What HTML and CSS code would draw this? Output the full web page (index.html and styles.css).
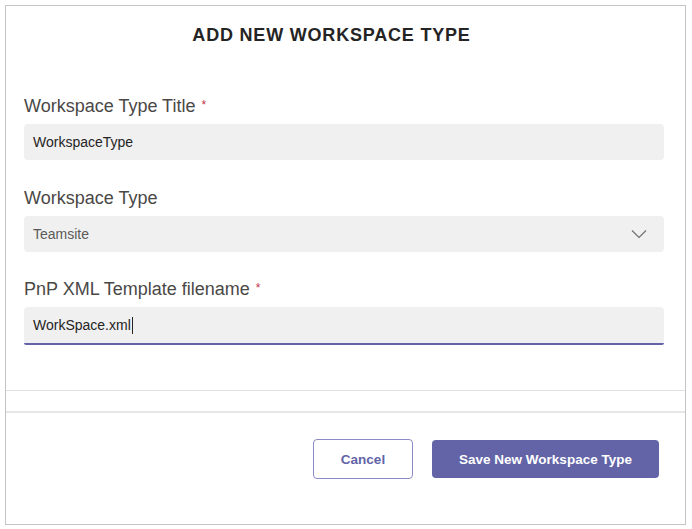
FILE: index.html
```html
<!DOCTYPE html>
<html lang="en">
<head>
    <meta charset="UTF-8">
    <meta name="viewport" content="width=device-width, initial-scale=1.0">
    <title>Add New Workspace Type</title>
    <link rel="stylesheet" href="styles.css">
</head>
<body>
    <div class="dialog">
        <h1 class="title">ADD NEW WORKSPACE TYPE</h1>
        <form class="fields" id="form">
            <div class="field">
                <label class="label">Workspace Type Title <span class="req">*</span></label>
                <div class="input">WorkspaceType</div>
            </div>
            <div class="field">
                <label class="label">Workspace Type</label>
                <div class="input select">
                    <span class="muted">Teamsite</span>
                    <svg class="chevron" width="16" height="10" viewBox="0 0 16 10">
                        <polyline points="1,1.5 8,8.5 15,1.5" fill="none" stroke="#6e6e6e" stroke-width="1.1"/>
                    </svg>
                </div>
            </div>
            <div class="field">
                <label class="label">PnP XML Template filename <span class="req">*</span></label>
                <div class="input focused">WorkSpace.xml<span class="caret"></span></div>
            </div>
        </form>
        <div class="band"></div>
        <div class="footer">
            <button type="button" class="btn btn-cancel">Cancel</button>
            <button type="submit" class="btn btn-save">Save New Workspace Type</button>
        </div>
    </div>
</body>
</html>
```

FILE: styles.css
```css
*{
    margin: 0;
    padding: 0;
    box-sizing: border-box;
}
body{
    background-color: white;
    font-family: "Liberation Sans", Arial, sans-serif;
    color: #252424;
}
.dialog{
    margin: 5px 0 0 5px;
    width: 681px;
    height: 520px;
    border: 1px solid #c4c4c4;
    display: flex;
    flex-direction: column;
}
.title{
    font-size: 18px;
    line-height: 24px;
    font-weight: bold;
    letter-spacing: 0.8px;
    text-align: center;
    color: #252424;
    padding: 17px 28px 0 0;
}
.fields{
    padding: 46px 21px 45px 18px;
    border-bottom: 1px solid #e1e1e1;
}
.field{
    margin-bottom: 26px;
}
.field:nth-child(2){
    margin-bottom: 24px;
}
.field:last-child{
    margin-bottom: 0;
}
.label{
    display: block;
    font-size: 18px;
    line-height: 24px;
    color: #4a4846;
    margin-bottom: 6px;
}
.req{
    color: #c4314b;
    font-size: 12px;
    vertical-align: 3px;
    margin-left: 1px;
}
.input{
    height: 36px;
    background-color: #f0f0f0;
    border-radius: 4px;
    padding: 0 9px;
    font-size: 14px;
    line-height: 36px;
    color: #252424;
    display: flex;
    align-items: center;
}
.select{
    justify-content: space-between;
}
.muted{
    color: #5b5a59;
}
.chevron{
    margin-right: 8px;
}
.focused{
    height: 38px;
    border-bottom: 2px solid #6264a7;
    border-radius: 4px 4px 2px 2px;
}
.caret{
    display: inline-block;
    width: 1px;
    height: 17px;
    background-color: #252424;
    margin-left: 1px;
}
.band{
    height: 22px;
    border-bottom: 2px solid #e6e6e6;
}
.footer{
    display: flex;
    justify-content: flex-end;
    align-items: center;
    gap: 19px;
    padding: 26px 26px 0 0;
}
.btn{
    font-family: "Liberation Sans", Arial, sans-serif;
    font-size: 13.5px;
    font-weight: bold;
    border-radius: 4px;
    cursor: pointer;
}
.btn-cancel{
    width: 100px;
    height: 40px;
    background-color: white;
    border: 1px solid #8b8cc7;
    color: #6264a7;
}
.btn-save{
    width: 227px;
    height: 38px;
    background-color: #6264a7;
    border: none;
    color: white;
}
.btn-save:hover{
    background-color: #585a96;
}
```
